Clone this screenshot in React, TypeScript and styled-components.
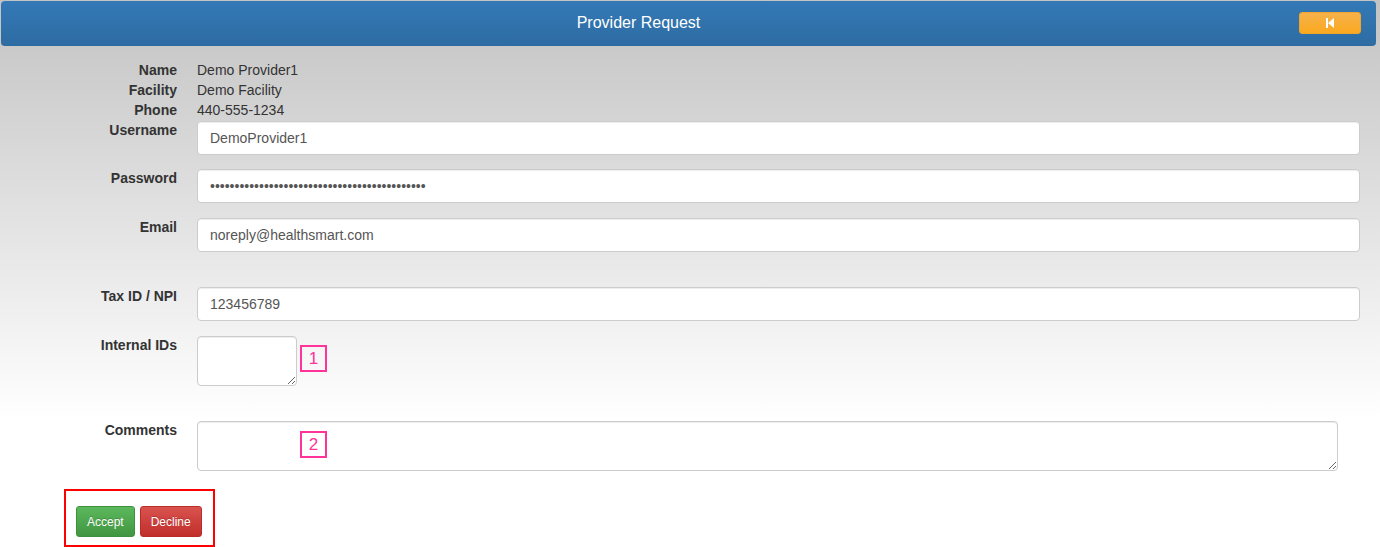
import React, { useState } from 'react';
import styled, { createGlobalStyle } from 'styled-components';

const GlobalStyle = createGlobalStyle`
  html, body {
    margin: 0;
    padding: 0;
  }
  body {
    font-family: 'Liberation Sans', Arial, sans-serif;
    font-size: 14px;
    color: #333;
    min-height: 547px;
    background: linear-gradient(to bottom, #c3c3c3 0px, #ffffff 420px) no-repeat, #ffffff;
  }
`;

const Page = styled.div`
  padding-top: 1px;
`;

const Header = styled.div`
  display: flex;
  align-items: center;
  height: 44px;
  margin: 0 4px 0 1px;
  border-radius: 4px;
  border-bottom: 1px solid #2d6a9f;
  background: linear-gradient(to bottom, #3379b6 0%, #2e6ca3 100%);
`;

const Title = styled.div`
  flex: 1;
  text-align: center;
  color: #fff;
  font-size: 16px;
  line-height: 20px;
`;

const HeaderActions = styled.div`
  width: 100px;
  display: flex;
  justify-content: flex-start;
  padding-left: 23px;
  box-sizing: border-box;
`;

const BackButton = styled.button`
  width: 62px;
  height: 22px;
  padding: 0;
  border: 1px solid #f0a42c;
  border-radius: 3px;
  background: linear-gradient(to bottom, #f5b24b 0%, #fba81e 100%);
  display: flex;
  align-items: center;
  justify-content: center;
  cursor: pointer;
`;

const Form = styled.div`
  padding-top: 14px;
`;

const InfoList = styled.div`
  margin-bottom: 1px;
`;

const InfoRow = styled.div`
  display: flex;
  line-height: 20px;
`;

const Label = styled.div`
  width: 177px;
  flex-shrink: 0;
  text-align: right;
  font-weight: bold;
  line-height: 20px;
  color: #333;
`;

const Value = styled.div`
  margin-left: 20px;
  color: #333;
`;

const Group = styled.div<{ $gap?: number }>`
  display: flex;
  align-items: flex-start;
  margin-bottom: ${(p) => p.$gap ?? 15}px;
  ${Label} {
    margin-top: -1px;
  }
`;

const Field = styled.div`
  position: relative;
  flex: 1;
  margin-left: 20px;
  margin-right: 20px;
`;

const Input = styled.input`
  display: block;
  width: 100%;
  height: 34px;
  box-sizing: border-box;
  padding: 6px 12px;
  font-family: 'Liberation Sans', Arial, sans-serif;
  font-size: 14px;
  color: #555;
  background: #fff;
  border: 1px solid #ccc;
  border-radius: 4px;
  box-shadow: inset 0 1px 1px rgba(0, 0, 0, 0.075);
  outline: none;
`;

const TextArea = styled.textarea<{ $width: string }>`
  display: block;
  width: ${(p) => p.$width};
  height: 50px;
  box-sizing: border-box;
  padding: 6px 12px;
  font-family: 'Liberation Sans', Arial, sans-serif;
  font-size: 14px;
  color: #555;
  background: #fff;
  border: 1px solid #ccc;
  border-radius: 4px;
  box-shadow: inset 0 1px 1px rgba(0, 0, 0, 0.075);
  outline: none;
`;

const Marker = styled.div<{ $top: number }>`
  position: absolute;
  left: 103px;
  top: ${(p) => p.$top}px;
  width: 27px;
  height: 27px;
  box-sizing: border-box;
  border: 2px solid #ff3399;
  color: #ff3399;
  font-size: 17px;
  line-height: 23px;
  text-align: center;
`;

const ActionBox = styled.div`
  display: inline-flex;
  gap: 5px;
  margin: 3px 0 0 64px;
  padding: 15px 11px 8px 10px;
  border: 2px solid #ff0000;
`;

const ActionButton = styled.button<{ $kind: 'accept' | 'decline' }>`
  height: 31px;
  padding: 0 10px;
  font-family: 'Liberation Sans', Arial, sans-serif;
  font-size: 12px;
  color: #fff;
  border-radius: 3px;
  cursor: pointer;
  text-shadow: 0 -1px 0 rgba(0, 0, 0, 0.2);
  border: 1px solid ${(p) => (p.$kind === 'accept' ? '#3e8f3e' : '#b92c28')};
  background: ${(p) =>
    p.$kind === 'accept'
      ? 'linear-gradient(to bottom, #5cb85c 0%, #419641 100%)'
      : 'linear-gradient(to bottom, #d9534f 0%, #c12e2a 100%)'};
`;

const StepBackIcon = () => (
  <svg width="8" height="10" viewBox="0 0 8 10">
    <rect x="0" y="0" width="2" height="10" fill="#fff" />
    <polygon points="2,5 8,0 8,10" fill="#fff" />
  </svg>
);

const App: React.FC = () => {
  const [username, setUsername] = useState('DemoProvider1');
  const [password, setPassword] = useState('x'.repeat(44));
  const [email, setEmail] = useState('noreply@healthsmart.com');
  const [taxId, setTaxId] = useState('123456789');
  const [internalIds, setInternalIds] = useState('');
  const [comments, setComments] = useState('');

  return (
    <Page>
      <GlobalStyle />
      <Header>
        <Title>Provider Request</Title>
        <HeaderActions>
          <BackButton type="button" aria-label="Back">
            <StepBackIcon />
          </BackButton>
        </HeaderActions>
      </Header>

      <Form>
        <InfoList>
          <InfoRow>
            <Label>Name</Label>
            <Value>Demo Provider1</Value>
          </InfoRow>
          <InfoRow>
            <Label>Facility</Label>
            <Value>Demo Facility</Value>
          </InfoRow>
          <InfoRow>
            <Label>Phone</Label>
            <Value>440-555-1234</Value>
          </InfoRow>
        </InfoList>

        <Group $gap={14}>
          <Label>Username</Label>
          <Field>
            <Input value={username} onChange={(e) => setUsername(e.target.value)} />
          </Field>
        </Group>
        <Group $gap={15}>
          <Label>Password</Label>
          <Field>
            <Input type="password" value={password} onChange={(e) => setPassword(e.target.value)} />
          </Field>
        </Group>
        <Group $gap={35}>
          <Label>Email</Label>
          <Field>
            <Input value={email} onChange={(e) => setEmail(e.target.value)} />
          </Field>
        </Group>
        <Group $gap={15}>
          <Label>Tax ID / NPI</Label>
          <Field>
            <Input value={taxId} onChange={(e) => setTaxId(e.target.value)} />
          </Field>
        </Group>
        <Group $gap={35}>
          <Label>Internal IDs</Label>
          <Field>
            <TextArea $width="100px" value={internalIds} onChange={(e) => setInternalIds(e.target.value)} />
            <Marker $top={9}>1</Marker>
          </Field>
        </Group>
        <Group $gap={15}>
          <Label>Comments</Label>
          <Field>
            <TextArea $width="calc(100% - 22px)" value={comments} onChange={(e) => setComments(e.target.value)} />
            <Marker $top={10}>2</Marker>
          </Field>
        </Group>

        <ActionBox>
          <ActionButton $kind="accept">Accept</ActionButton>
          <ActionButton $kind="decline">Decline</ActionButton>
        </ActionBox>
      </Form>
    </Page>
  );
};

export default App;
